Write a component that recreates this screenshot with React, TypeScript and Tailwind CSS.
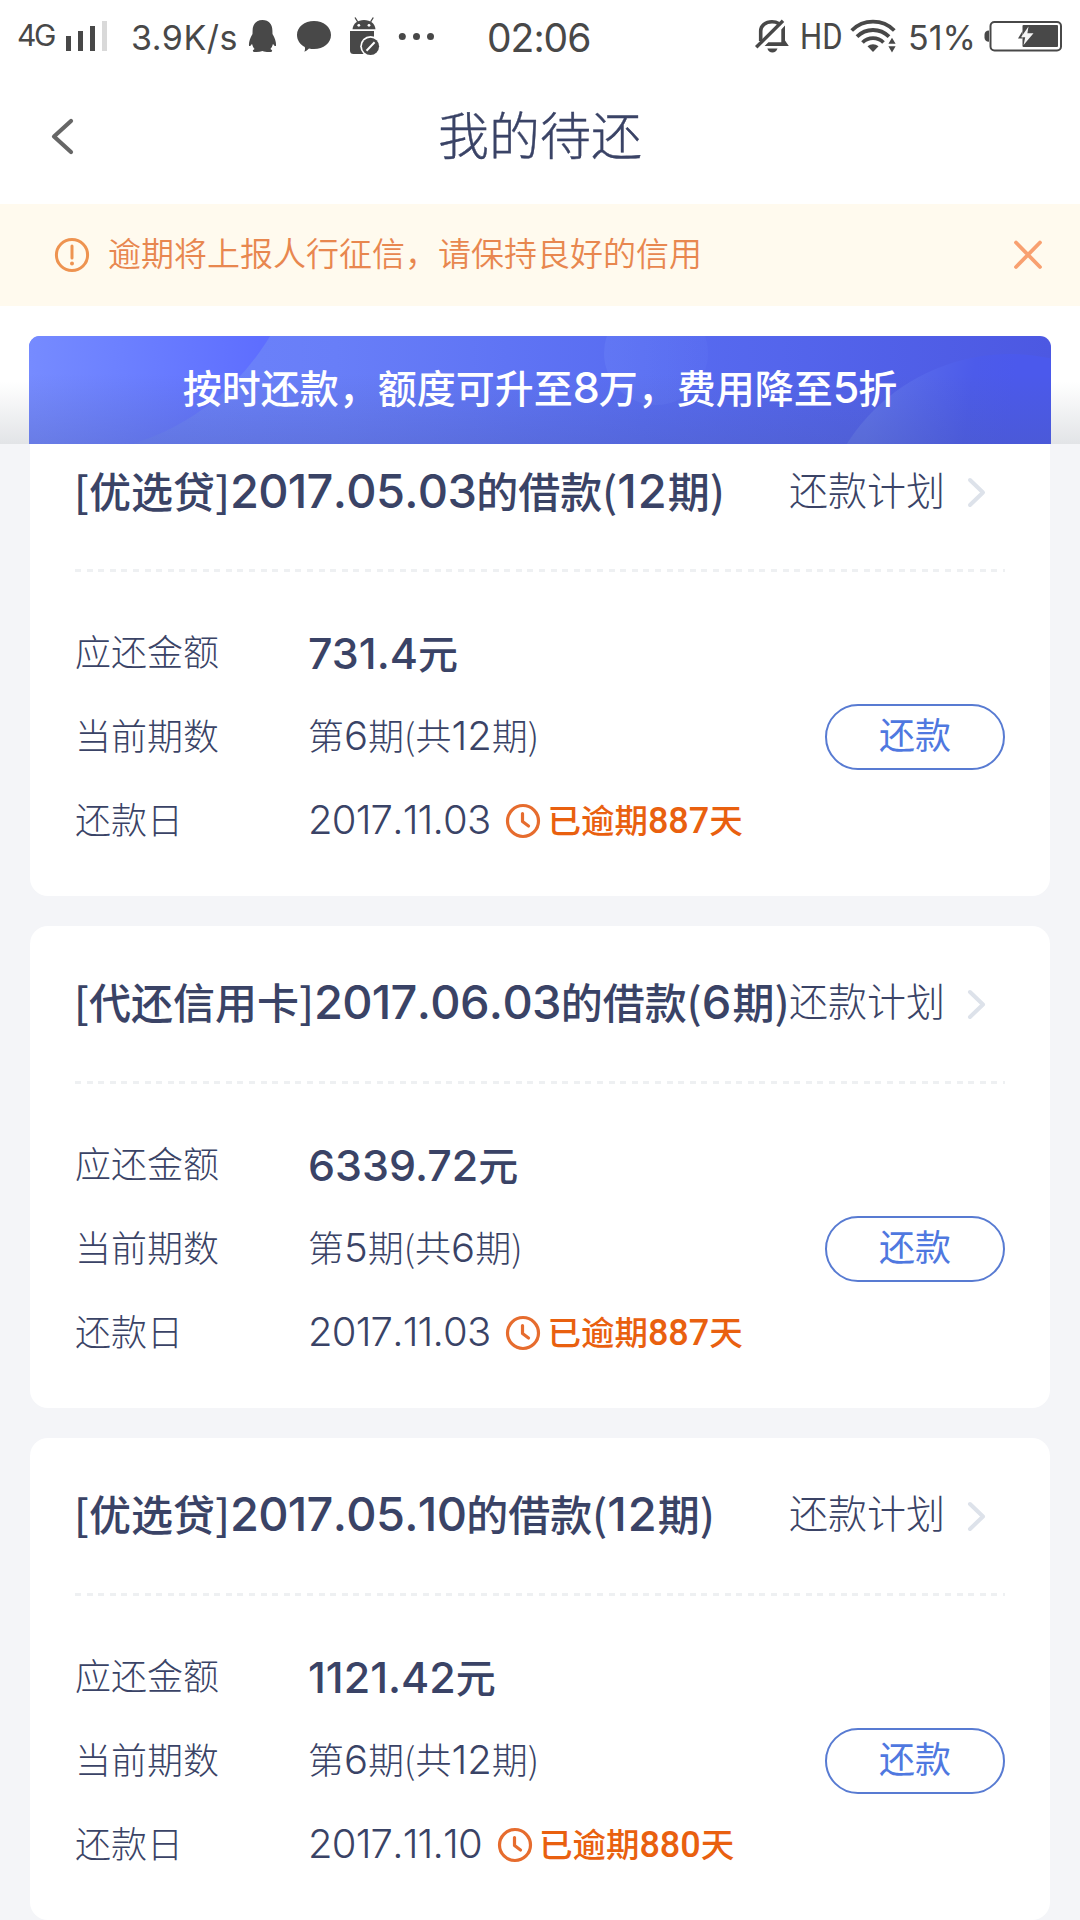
import { Fragment } from "react";

type Loan = {
  title: string;
  amount: string;
  term: string;
  due: string;
  overdue: string;
};

const loans: Loan[] = [
  { title: "[优选贷]2017.05.03的借款(12期)", amount: "731.4元", term: "第6期(共12期)", due: "2017.11.03", overdue: "已逾期887天" },
  { title: "[代还信用卡]2017.06.03的借款(6期)", amount: "6339.72元", term: "第5期(共6期)", due: "2017.11.03", overdue: "已逾期887天" },
  { title: "[优选贷]2017.05.10的借款(12期)", amount: "1121.42元", term: "第6期(共12期)", due: "2017.11.10", overdue: "已逾期880天" },
];

/* Sets digits in their own face and size next to the Chinese characters. */
function Mixed({ text, digits, dates = digits }: { text: string; digits: string; dates?: string }) {
  return (
    <>
      {text.split(/([\d.]+)/).map((part, i) =>
        i % 2 ? (
          <span key={i} className={part.includes(".") ? dates : digits}>
            {part}
          </span>
        ) : (
          <Fragment key={i}>{part}</Fragment>
        ),
      )}
    </>
  );
}

function SignalIcon() {
  return (
    <svg width="41" height="30" viewBox="66 21 41 30" fill="#484848">
      <rect x="66" y="36" width="5" height="15" />
      <rect x="78" y="31" width="5" height="20" />
      <rect x="90" y="26" width="5" height="25" />
      <rect x="102" y="21" width="5" height="30" fill="#d9d9d9" />
    </svg>
  );
}

function NotificationIcons() {
  return (
    <svg width="188" height="40" viewBox="248 16 188 40" fill="#484848">
      <path d="M262.500 20C256 20 252.600 24.600 252.600 30.500L252.500 34C250 38 248.600 42.500 249 45.800C249.600 46.600 250.900 45.800 252 43.800C252.500 46 253.400 47.700 254.600 49C252.600 49.900 252.200 51.500 254 51.900C256.700 52.400 260 52 262.500 51.100C265 52 268.400 52.400 271 51.900C272.800 51.500 272.400 49.900 270.400 49C271.600 47.700 272.500 46 273 43.800C274.100 45.800 275.400 46.600 276 45.800C276.400 42.500 275 38 272.500 34L272.400 30.500C272.400 24.600 269 20 262.500 20Z" />
      <path d="M314 21C323.500 21 331 27 331 35C331 43 323.500 49 314 49C312.300 49 310.600 48.900 309 48.500C307.500 50 306 51 304.400 51.800C305 50.200 305.200 48.600 304.800 47C300 44.500 297 40 297 35C297 27 304.500 21 314 21Z" />
      <path d="M355 17.500L357.700 21.800M373.300 17.500L370.600 21.800" stroke="#484848" strokeWidth="1.300" />
      <path d="M352.500 29.300C353 23.500 357.500 20 364 20C370.500 20 375 23.500 375.500 29.300Z" />
      <circle cx="358.800" cy="25.300" r="1.400" fill="#fff" />
      <circle cx="369" cy="25.300" r="1.400" fill="#fff" />
      <path d="M350 31H374V54H353.500Q350 54 350 50.500Z" />
      <circle cx="370.500" cy="46.300" r="10.300" fill="#fff" />
      <circle cx="370.500" cy="46.300" r="8.600" />
      <path d="M366.500 50.700L374.600 42.200" stroke="#fff" strokeWidth="2" />
      <circle cx="402.300" cy="36.500" r="3.500" />
      <circle cx="416.500" cy="36.500" r="3.500" />
      <circle cx="430.500" cy="36.500" r="3.500" />
    </svg>
  );
}

function MutedBellIcon() {
  return (
    <svg width="34" height="36" viewBox="755 18 34 36" fill="none" stroke="#484848">
      <path d="M760.700 41V31C760.700 25.500 765.500 21.700 772 21.700C774.800 21.700 776.900 22.300 778.600 23.400" strokeWidth="3.600" />
      <path d="M781.300 29.500L785 25.500V40.500L788.800 46H764.600L768.400 42.300H781.300Z" fill="#484848" stroke="none" />
      <path d="M756.200 47.300L783 20.700" strokeWidth="3.400" />
      <path d="M767.300 48.500H777.500C776.600 51.300 774.800 52.600 772.400 52.600C770 52.600 768.200 51.300 767.300 48.500Z" fill="#484848" stroke="none" />
    </svg>
  );
}

function WifiIcon() {
  return (
    <svg width="47" height="36" viewBox="850 18 47 36" fill="none" stroke="#484848" strokeWidth="3.800">
      <path d="M851.700 30.500C857.500 24.700 864.800 21.700 873 21.700C881.200 21.700 888.500 24.700 894.300 30.500" />
      <path d="M857 36.700C861.400 32.300 866.800 30 873 30C879.200 30 884.600 32.300 889 36.700" />
      <path d="M862.500 42.500C865.500 39.600 869 38.200 873 38.200C877 38.200 880.500 39.600 883.500 42.500" />
      <path d="M867.500 46.300C870.800 43.600 875.200 43.600 878.500 46.300L873 52Z" fill="#484848" stroke="none" />
      <path d="M892 37.800L895.600 43.800H888.400ZM892 52.400L895.600 46.200H888.400Z" fill="#484848" stroke="none" />
    </svg>
  );
}

function BatteryIcon() {
  return (
    <svg width="80" height="32" viewBox="983 20 80 32" fill="#484848">
      <path d="M989 30.500V41.800C986 41.800 984.500 40 984.500 37.500V34.700C984.500 32.200 986 30.500 989 30.500Z" />
      <rect x="990.500" y="22" width="70.500" height="28.500" rx="4" fill="#fff" stroke="#484848" strokeWidth="2" />
      <rect x="1022.500" y="25" width="35.500" height="22" rx="1" />
      <path d="M1022.500 31L1018 38.500H1022.500Z" />
      <path d="M1028.500 26.500L1021 37.300H1025.200L1023.600 45L1033.500 33.200H1027.400Z" fill="#f4f4f4" />
    </svg>
  );
}

function StatusBar() {
  return (
    <div className="flex h-[72px] items-center whitespace-nowrap pl-[17px] font-[Inter] leading-none text-[#484848]">
      <div className="w-[49px] pb-0.5 text-[30px] tracking-[-2.500px]">4G</div>
      <SignalIcon />
      <div className="ml-[24px] w-[117px] pt-[3px] text-[34px] tracking-[.500px]">3.9K/s</div>
      <NotificationIcons />
      <div className="ml-[51px] w-[268px] pt-[3px] text-[39px] tracking-[-1px]">02:06</div>
      <MutedBellIcon />
      <div className="ml-[11px] w-[50px] origin-left scale-x-[.84] font-[Roboto] text-[37px] font-normal">HD</div>
      <WifiIcon />
      <div className="ml-[11px] w-[75px] pt-[3px] text-[34px]">51%</div>
      <BatteryIcon />
    </div>
  );
}

function TitleBar() {
  return (
    <div className="grid h-[132px] grid-cols-[1fr_auto_1fr] items-center pb-1">
      <svg className="ml-[49px]" width="26" height="40" viewBox="0 0 26 40" fill="none" stroke="#666" strokeWidth="4.200" strokeLinecap="round" strokeLinejoin="round">
        <path d="M22 5L5 20.500L22 36" />
      </svg>
      <h1 className="pb-1.5 text-[51px] font-light leading-none text-[#3a4366] [-webkit-text-stroke:.4px_#3a4366]">我的待还</h1>
    </div>
  );
}

function Notice() {
  return (
    <div className="flex h-[102px] items-center bg-[#fffaee] pl-[54px] pr-[36px]">
      <svg width="36" height="36" viewBox="0 0 36 36" fill="none" stroke="#ee9350" strokeWidth="3">
        <circle cx="18" cy="18" r="15.600" />
        <path d="M18 9V21" strokeLinecap="round" />
        <circle cx="18" cy="26.500" r="2" fill="#ee9350" stroke="none" />
      </svg>
      <p className="ml-[18px] flex-1 pb-1.5 text-[33px] font-[350] leading-none text-[#e8874f]">逾期将上报人行征信，请保持良好的信用</p>
      <svg width="32" height="32" viewBox="0 0 32 32" fill="none" stroke="#f8a070" strokeWidth="3.800" strokeLinecap="round">
        <path d="M4 3.500L28 28M28 3.500L4 28" />
      </svg>
    </div>
  );
}

function Banner() {
  return (
    <div className="bg-linear-to-b from-white from-55% to-[#e2e4e7] px-[29px] pt-[30px]">
      <div className="relative flex h-[108px] items-center justify-center overflow-hidden rounded-t-[11px]">
        <svg className="absolute inset-0" width="1022" height="108" viewBox="0 0 1022 108">
          <defs>
            <linearGradient id="base" x1="0" x2="1" y1="0" y2="0">
              <stop offset="0" stopColor="#7086fc" />
              <stop offset=".3" stopColor="#687ef8" />
              <stop offset=".6" stopColor="#586cf1" />
              <stop offset="1" stopColor="#4c58e2" />
            </linearGradient>
            <linearGradient id="left" gradientUnits="userSpaceOnUse" x1="0" y1="20" x2="230" y2="0">
              <stop offset="0" stopColor="#768bff" />
              <stop offset=".4" stopColor="#6c80ff" />
              <stop offset="1" stopColor="#5e6eff" />
            </linearGradient>
            <linearGradient id="middle" x1="0" x2="1" y1="0" y2="0">
              <stop offset="0" stopColor="#687ff6" stopOpacity=".5" />
              <stop offset="1" stopColor="#687ff6" stopOpacity=".15" />
            </linearGradient>
            <linearGradient id="right" gradientUnits="userSpaceOnUse" x1="840" y1="70" x2="980" y2="90">
              <stop offset="0" stopColor="#5f72ea" />
              <stop offset=".7" stopColor="#4c5bea" />
              <stop offset="1" stopColor="#4b59ec" />
            </linearGradient>
            <linearGradient id="shade" x1="0" x2="0" y1="0" y2="1">
              <stop offset=".35" stopColor="#4a5aaa" stopOpacity="0" />
              <stop offset="1" stopColor="#4a5aaa" stopOpacity=".3" />
            </linearGradient>
          </defs>
          <rect width="1022" height="108" fill="url(#base)" />
          <circle cx="31" cy="-126" r="245" fill="url(#left)" />
          <circle cx="627" cy="17" r="52" fill="url(#middle)" />
          <circle cx="981" cy="211" r="193" fill="url(#right)" />
          <rect width="1022" height="108" fill="url(#shade)" />
        </svg>
        <p className="relative whitespace-nowrap pb-[5px] text-[39px] font-medium leading-none text-white">
          <Mixed text="按时还款，额度可升至8万，费用降至5折" digits="font-[Inter] text-[43px] tracking-[-1px]" />
        </p>
      </div>
    </div>
  );
}

function ClockIcon() {
  return (
    <svg className="ml-[15px] mr-[6px] mt-0.5" width="36" height="36" viewBox="0 0 36 36" fill="none" stroke="#e66c2e" strokeWidth="3.200" strokeLinecap="round" strokeLinejoin="round">
      <circle cx="18" cy="18" r="15.500" />
      <path d="M17.500 10.500V18.500L23.500 23" />
    </svg>
  );
}

function LoanCard({ loan, first }: { loan: Loan; first: boolean }) {
  const label = "w-[233px] pb-1 text-[36px]";
  return (
    <section className={first ? "rounded-b-[18px] bg-white px-[45px]" : "rounded-[18px] bg-white px-[45px]"}>
      <div className={first ? "flex h-[125px] items-center pb-[29px]" : "flex h-[155px] items-center"}>
        <h2 className="-ml-px w-[715px] whitespace-nowrap pb-[4px] text-[42px] font-medium leading-none">
          <Mixed
            text={loan.title}
            digits="font-[Inter] text-[47px] tracking-[1px] [font-kerning:none]"
            dates="font-[Inter] text-[47px] tracking-[-.700px] [font-kerning:none]"
          />
        </h2>
        <span className="whitespace-nowrap pb-2 text-[39px] font-light leading-none">还款计划</span>
        <svg className="ml-[21px]" width="22" height="32" viewBox="0 0 22 32" fill="none" stroke="#dde2ea" strokeWidth="4" strokeLinecap="round" strokeLinejoin="round">
          <path d="M4 4L17 16.500L4 29" />
        </svg>
      </div>
      <div className="h-[3px] bg-[repeating-linear-gradient(90deg,#eef0f2_0_6px,transparent_6px_11.600px)]" />
      <div className="pb-[34px] pt-[38px] font-light leading-none">
        <div className="flex h-[84px] items-center">
          <span className={label}>应还金额</span>
          <span className="pt-0.5 text-[40px] font-medium">
            <Mixed text={loan.amount} digits="font-[Inter] text-[43px]" />
          </span>
        </div>
        <div className="flex h-[84px] items-center">
          <span className={label}>当前期数</span>
          <span className="flex-1 text-[36px]">
            <Mixed text={loan.term} digits="font-[Inter] text-[40px]" />
          </span>
          <button className="mt-0.5 flex h-[66px] w-[180px] items-center justify-center rounded-full border-2 border-[#587bd2] pb-2 text-[36px] font-normal text-[#4f78e0]">还款</button>
        </div>
        <div className="flex h-[84px] items-center">
          <span className={label}>还款日</span>
          <span className="font-[Inter] text-[40px] tracking-[-.800px] [font-kerning:none]">{loan.due}</span>
          <ClockIcon />
          <span className="text-[33.500px] font-medium text-[#e9600f]">
            <Mixed text={loan.overdue} digits="font-[Roboto] text-[36px]" />
          </span>
        </div>
      </div>
    </section>
  );
}

export default function App() {
  return (
    <div className="h-[1920px] w-[1080px] overflow-hidden bg-[#f4f5f8] font-['Noto_Sans_CJK_SC',sans-serif] text-[#3a4366]">
      <header className="bg-white">
        <StatusBar />
        <TitleBar />
        <Notice />
        <Banner />
      </header>
      <main className="flex flex-col gap-[30px] px-[30px]">
        {loans.map((loan, i) => (
          <LoanCard key={loan.title} loan={loan} first={i === 0} />
        ))}
      </main>
    </div>
  );
}
